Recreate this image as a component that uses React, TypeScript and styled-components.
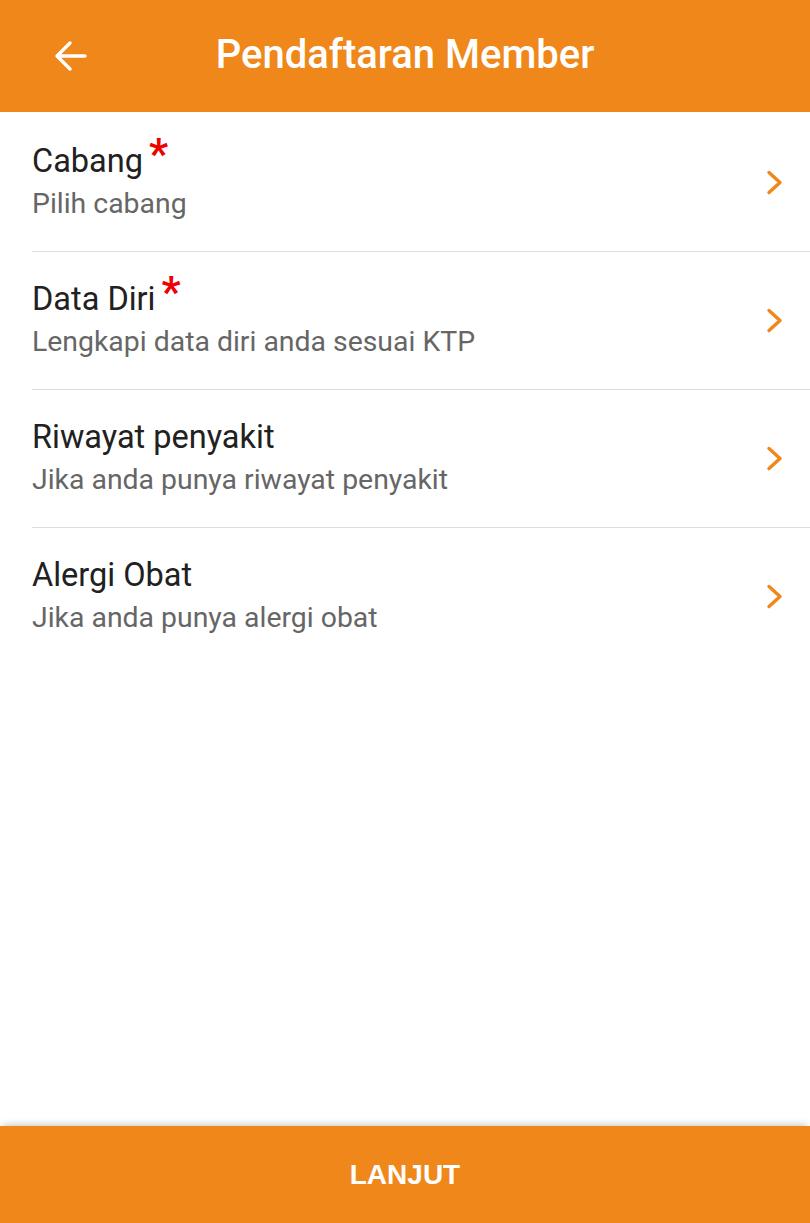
import React from "react";
import styled, { createGlobalStyle } from "styled-components";

const ORANGE = "#F0871B";

type Section = {
  title: string;
  hint: string;
  required?: boolean;
};

const sections: Section[] = [
  { title: "Cabang", hint: "Pilih cabang", required: true },
  { title: "Data Diri", hint: "Lengkapi data diri anda sesuai KTP", required: true },
  { title: "Riwayat penyakit", hint: "Jika anda punya riwayat penyakit" },
  { title: "Alergi Obat", hint: "Jika anda punya alergi obat" },
];

const BackIcon = () => (
  <svg width="33" height="32" viewBox="0 0 33 32" fill="none">
    <path
      d="M31 16H3M16 3L3 16l13 13"
      stroke="#fff"
      strokeWidth="3.4"
      strokeLinecap="round"
      strokeLinejoin="round"
    />
  </svg>
);

const Chevron = () => (
  <svg width="18" height="25" viewBox="0 0 18 25" fill="none">
    <path
      d="M3 2.5l11 10-11 10"
      stroke={ORANGE}
      strokeWidth="3.4"
      strokeLinecap="round"
      strokeLinejoin="round"
    />
  </svg>
);

const App: React.FC = () => {
  return (
    <>
      <GlobalStyle />
      <Screen>
        <Header>
          <BackButton aria-label="Kembali">
            <BackIcon />
          </BackButton>
          <HeaderTitle>Pendaftaran Member</HeaderTitle>
        </Header>

        <List>
          {sections.map((s) => (
            <Row key={s.title}>
              <RowText>
                <RowTitle>
                  {s.title}
                  {s.required && <Required>*</Required>}
                </RowTitle>
                <RowHint>{s.hint}</RowHint>
              </RowText>
              <ChevronWrap>
                <Chevron />
              </ChevronWrap>
            </Row>
          ))}
        </List>

        <Footer>
          <SubmitButton>LANJUT</SubmitButton>
        </Footer>
      </Screen>
    </>
  );
};

export default App;

const GlobalStyle = createGlobalStyle`
  html, body {
    margin: 0;
    padding: 0;
    background: #ffffff;
  }
  * {
    box-sizing: border-box;
  }
`;

const Screen = styled.div`
  min-height: 100vh;
  display: flex;
  flex-direction: column;
  font-family: Roboto, "Noto Sans", sans-serif;
  background: #ffffff;
`;

const Header = styled.header`
  height: 112px;
  background: ${ORANGE};
  display: flex;
  align-items: center;
  justify-content: center;
  position: relative;
`;

const BackButton = styled.button`
  position: absolute;
  left: 38px;
  top: 24px;
  width: 64px;
  height: 64px;
  border: none;
  background: transparent;
  padding: 0;
  display: flex;
  align-items: center;
  justify-content: center;
`;

const HeaderTitle = styled.h1`
  margin: 0;
  color: #ffffff;
  font-size: 40px;
  font-weight: 500;
  line-height: 48px;
  padding-bottom: 2px;
`;

const List = styled.div`
  flex: 1;
  padding: 1px 0 0 32px;
`;

const Row = styled.div`
  display: flex;
  align-items: center;
  padding: 29px 0 29px;
  border-bottom: 1px solid #dedede;

  &:first-child {
    padding-top: 29px;
  }

  & + & {
    padding-top: 28px;
  }

  &:last-child {
    border-bottom: none;
  }
`;

const RowText = styled.div`
  flex: 1;
  display: flex;
  flex-direction: column;
  gap: 6px;
`;

const RowTitle = styled.div`
  font-size: 32.5px;
  line-height: 38px;
  color: #212121;
`;

const Required = styled.span`
  color: #f00000;
  font-size: 42px;
  font-weight: 700;
  line-height: 0;
  margin-left: 6px;
  vertical-align: 4px;
`;

const RowHint = styled.div`
  font-size: 28.4px;
  line-height: 36px;
  color: #666666;
`;

const ChevronWrap = styled.div`
  width: 60px;
  display: flex;
  justify-content: center;
  padding-right: 10px;
`;

const Footer = styled.footer`
  box-shadow: 0 -3px 8px -3px rgba(0, 0, 0, 0.3);
`;

const SubmitButton = styled.button`
  width: 100%;
  height: 97px;
  border: none;
  background: ${ORANGE};
  color: #ffffff;
  font-family: "Liberation Sans", Arial, sans-serif;
  font-size: 28px;
  font-weight: 700;
  display: flex;
  align-items: center;
  justify-content: center;
`;
